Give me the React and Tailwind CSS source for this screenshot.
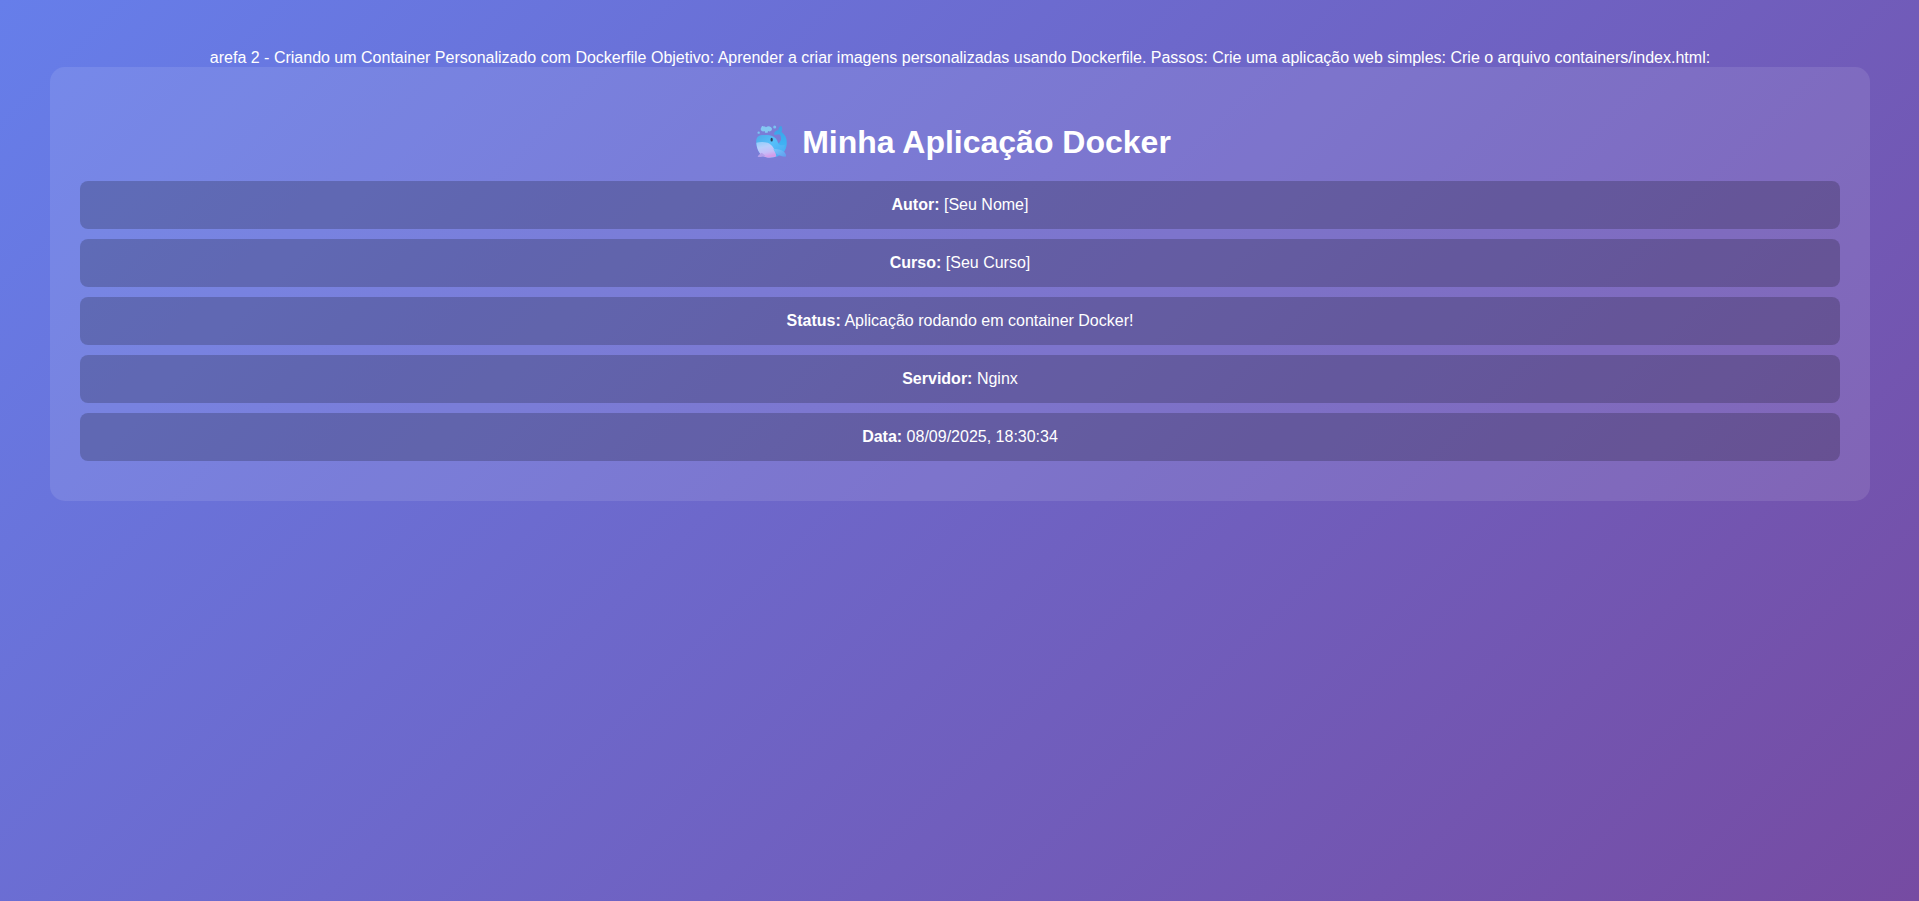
const details = [
  { label: "Autor:", value: "[Seu Nome]" },
  { label: "Curso:", value: "[Seu Curso]" },
  { label: "Status:", value: "Aplicação rodando em container Docker!" },
  { label: "Servidor:", value: "Nginx" },
  { label: "Data:", value: "08/09/2025, 18:30:34" },
];

function Whale() {
  return (
    <svg className="h-9 w-11 shrink-0" viewBox="24 42 132 108" role="img" aria-label="Baleia">
      <defs>
        <linearGradient id="body" x1="0" y1="0" x2="1" y2="1">
          <stop offset="0" stopColor="#4fa9e8" />
          <stop offset="0.45" stopColor="#55c0fa" />
          <stop offset="1" stopColor="#4aa6f2" />
        </linearGradient>
        <linearGradient id="tail" x1="0" y1="0" x2="0" y2="1">
          <stop offset="0" stopColor="#3f9fe4" />
          <stop offset="0.5" stopColor="#3cb0f2" />
          <stop offset="1" stopColor="#4db4f8" />
        </linearGradient>
        <linearGradient id="belly" x1="0" y1="0" x2="0.3" y2="1">
          <stop offset="0" stopColor="#8fcdfb" />
          <stop offset="0.4" stopColor="#b9cffc" />
          <stop offset="0.75" stopColor="#c5bdf8" />
          <stop offset="1" stopColor="#d39dea" />
        </linearGradient>
        <linearGradient id="fin" x1="0" y1="0" x2="1" y2="1">
          <stop offset="0" stopColor="#74c8fc" />
          <stop offset="1" stopColor="#5f9cee" />
        </linearGradient>
      </defs>
      <path d="M104 102 C114 102 121 94 120 84 C120 79 118 75 114 73 C109 74 103 76 99 73 C99 66 105 61 112 61 C112 54 116 48 121 48 C125 54 124 61 121 66 C133 73 139 87 137 104 C135 119 128 130 116 136 L96 122 Z" fill="url(#tail)" />
      <path d="M46 98 C44 82 52 75 68 75 C88 74 105 79 110 95 C113 106 121 108 131 104 C131 124 119 137 103 141 C92 144 78 144 66 138 C54 131 47 115 46 98 Z" fill="url(#body)" />
      <path d="M46 98 C56 95 68 95 80 98 C94 103 103 119 106 139 C94 145 76 145 66 138 C53 130 47 114 46 98 Z" fill="url(#belly)" />
      <path d="M62 128 C56 132 51 136 50 140 C57 142 67 141 73 137 Z" fill="#b4a0ea" />
      <path d="M97 116 C100 128 110 138 134 140 C138 134 132 127 124 122 C114 117 105 117 97 116 Z" fill="url(#fin)" />
      <ellipse cx="92" cy="89" rx="3.4" ry="5.5" fill="#2b3d5c" />
      <path d="M72 68 L71 63 C66 66 59 63 59 57 C60 49 70 46 75 52 C80 46 91 48 93 56 C93 63 86 66 81 63 L80 68 Z" fill="#84c8f2" />
      <circle cx="101" cy="51" r="4.5" fill="#7cc3f2" />
      <circle cx="53" cy="68" r="3.5" fill="#7cc3f2" />
      <circle cx="64" cy="50" r="2" fill="#8ccdf3" />
    </svg>
  );
}

export default function App() {
  return (
    <div className="min-h-screen bg-linear-[135deg,#667eea_0%,#764ba2_100%] pt-[49px] pr-[49px] pb-[50px] pl-[50px] text-center font-['Liberation_Sans',Arial,sans-serif] text-base/[18px] text-white">
      <p>
        arefa 2 - Criando um Container Personalizado com Dockerfile Objetivo: Aprender a criar imagens
        personalizadas usando Dockerfile. Passos: Crie uma aplicação web simples: Crie o arquivo
        containers/index.html:
      </p>
      <main className="rounded-[15px] bg-white/10 px-[30px] pt-[54px] pb-10">
        <h1 className="mb-[18px] flex items-center justify-center gap-[9px] text-[32px]/[42px] font-bold">
          <Whale />
          <span>Minha Aplicação Docker</span>
        </h1>
        <div className="flex flex-col gap-2.5">
          {details.map(({ label, value }) => (
            <p key={label} className="rounded-lg bg-black/20 p-[15px]">
              <strong className="font-bold">{label}</strong> {value}
            </p>
          ))}
        </div>
      </main>
    </div>
  );
}
